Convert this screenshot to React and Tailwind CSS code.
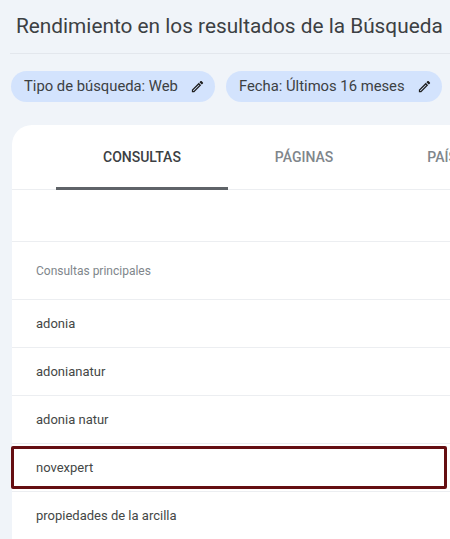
import React from 'react';
import { MdOutlineEdit } from 'react-icons/md';

const filters = ['Tipo de búsqueda: Web', 'Fecha: Últimos 16 meses'];
const tabs = ['CONSULTAS', 'PÁGINAS', 'PAÍSES'];
const queries = ['adonia', 'adonianatur', 'adonia natur', 'novexpert', 'propiedades de la arcilla'];

const FilterChip = ({ label }) => (
  <div className="flex items-center h-[31px] pl-[13px] pr-[10px] rounded-full bg-[#d3e3fd] text-[14.8px] text-[#3c4043] whitespace-nowrap">
    <span>{label}</span>
    <MdOutlineEdit className="ml-[12px] text-[#1f1f1f]" size={15} />
  </div>
);

const App = () => {
  return (
    <div className="w-[450px] h-[539px] overflow-hidden bg-[#f0f4f9] font-['Roboto',sans-serif]">
      {/* Header */}
      <div className="pl-[16px] pt-[12px] h-[53px] text-[20.8px] leading-[29px] text-[#3c4043] whitespace-nowrap">
        Rendimiento en los resultados de la Búsqueda
      </div>
      <div className="ml-[10px] border-t border-[#e3e7ed]" />

      {/* Filters */}
      <div className="flex gap-[11px] pl-[11px] mt-[17px]">
        {filters.map((f) => (
          <FilterChip key={f} label={f} />
        ))}
      </div>

      {/* Card */}
      <div className="ml-[12px] mt-[23px] w-[460px] bg-white rounded-tl-[20px]">
        <div className="flex pl-[44px] h-[65px] border-b border-[#eceef1]">
          {tabs.map((t, i) => (
            <div
              key={t}
              className={`relative flex items-center px-[47px] text-[14px] font-medium whitespace-nowrap ${
                i === 0 ? 'text-[#3c4043]' : 'text-[#80868b]'
              }`}
            >
              {t}
              {i === 0 && <div className="absolute left-0 right-0 -bottom-px h-[3px] bg-[#5f6368]" />}
            </div>
          ))}
        </div>

        <div className="h-[52px] border-b border-[#eceef1]" />

        <div className="flex items-center h-[58px] pl-[24px] border-b border-[#eceef1] text-[12px] text-[#80868b]">
          Consultas principales
        </div>

        {queries.map((q) => (
          <div
            key={q}
            className="relative flex items-center h-[48px] pl-[24px] border-b border-[#eceef1] text-[13px] text-[#444746]"
          >
            {q}
            {q === 'novexpert' && (
              <div className="absolute left-[-1px] top-[2px] w-[436px] h-[43px] border-[3px] border-[#650e12] rounded-[2px]" />
            )}
          </div>
        ))}
      </div>
    </div>
  );
};

export default App;
